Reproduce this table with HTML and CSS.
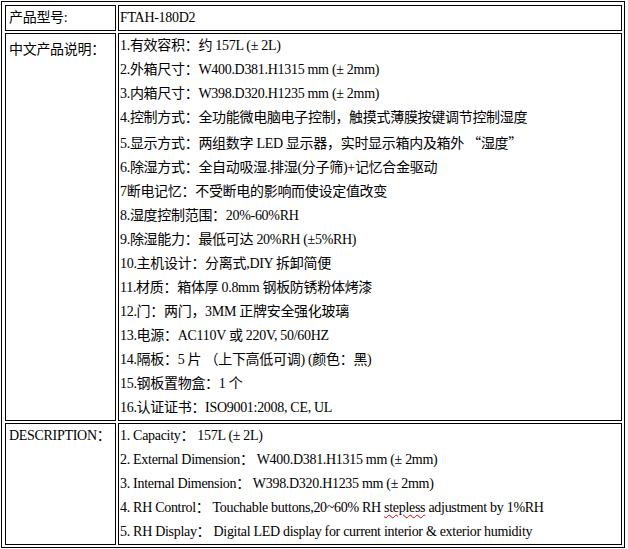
FILE: index.html
```html
<!DOCTYPE html>
<html lang="zh">
<head>
    <meta charset="UTF-8">
    <title>FTAH-180D2</title>
    <link rel="stylesheet" href="styles.css">
</head>
<body>
    <table class="spec">
        <tr>
            <td class="label">产品型号:</td>
            <td class="value">FTAH-180D2</td>
        </tr>
        <tr>
            <td class="label label-cn">中文产品说明：</td>
            <td class="value">
                <p>1.有效容积：约 157L (± 2L)</p>
                <p>2.外箱尺寸：W400.D381.H1315 mm (± 2mm)</p>
                <p>3.内箱尺寸：W398.D320.H1235 mm (± 2mm)</p>
                <p>4.控制方式：全功能微电脑电子控制，触摸式薄膜按键调节控制湿度</p>
                <p>5.显示方式：两组数字 LED 显示器，实时显示箱内及箱外 <span class="cjk">“湿度”</span></p>
                <p>6.除湿方式：全自动吸湿.排湿(分子筛)+记忆合金驱动</p>
                <p>7断电记忆：不受断电的影响而使设定值改变</p>
                <p>8.湿度控制范围：20%-60%RH</p>
                <p>9.除湿能力：最低可达 20%RH (±5%RH)</p>
                <p>10.主机设计：分离式,DIY 拆卸简便</p>
                <p>11.材质：箱体厚 0.8mm 钢板防锈粉体烤漆</p>
                <p>12.门：两门，3MM 正牌安全强化玻璃</p>
                <p>13.电源：AC110V 或 220V, 50/60HZ</p>
                <p>14.隔板：5 片 （上下高低可调) (颜色：黑)</p>
                <p>15.钢板置物盒：1 个</p>
                <p>16.认证证书：ISO9001:2008, CE, UL</p>
            </td>
        </tr>
        <tr>
            <td class="label">DESCRIPTION：</td>
            <td class="value">
                <p>1. Capacity： 157L (± 2L)</p>
                <p>2. External Dimension： W400.D381.H1315 mm (± 2mm)</p>
                <p>3. Internal Dimension： W398.D320.H1235 mm (± 2mm)</p>
                <p>4. RH Control： Touchable buttons,20~60% RH <span class="typo">stepless</span> adjustment by 1%RH</p>
                <p>5. RH Display： Digital LED display for current interior &amp; exterior humidity</p>
            </td>
        </tr>
    </table>
</body>
</html>
```

FILE: styles.css
```css
* {
    margin: 0;
    padding: 0;
    box-sizing: border-box;
}

body {
    font-family: "Liberation Serif", "Noto Sans CJK SC", serif;
    font-size: 14px;
    line-height: 24px;
    letter-spacing: -0.3px;
    color: #000;
    background: #fff;
}

.spec {
    margin: 1px 0 0 1px;
    width: 624px;
    border: 1px solid #000;
    border-spacing: 2px;
    padding: 1px 0 0 1px;
}

.spec td {
    border: 1px solid #000;
    vertical-align: top;
}

.label {
    width: 111px;
    padding: 0 3px;
}

.label-cn {
    padding-top: 4px;
}

.value {
    padding: 0 1px;
}

.cjk {
    font-family: "Noto Sans CJK SC", sans-serif;
}

.typo {
    text-decoration: underline wavy #d00;
    text-decoration-thickness: 1px;
    text-underline-offset: 2px;
}
```
